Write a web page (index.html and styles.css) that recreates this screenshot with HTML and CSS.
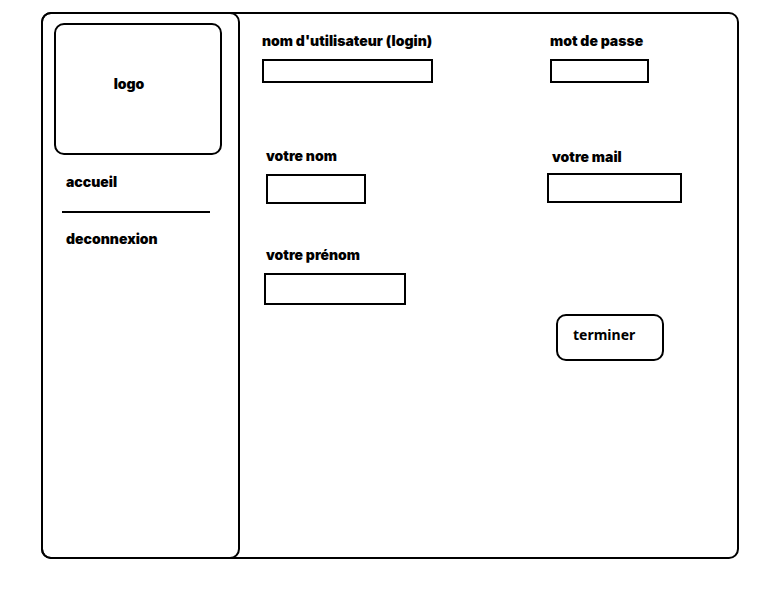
FILE: index.html
```html
<!DOCTYPE html>
<html lang="fr">
<head>
<meta charset="utf-8">
<meta name="viewport" content="width=device-width, initial-scale=1">
<title>Inscription</title>
<link rel="stylesheet" href="styles.css">
</head>
<body>
<div class="frame">
  <aside class="sidebar">
    <div class="logo">logo</div>
    <nav class="menu">
      <a class="menu-link" href="#">accueil</a>
      <hr class="separator">
      <a class="menu-link" href="#">deconnexion</a>
    </nav>
  </aside>
  <main class="content">
    <form class="form">
      <div class="column">
        <div class="field field-login">
          <label for="login">nom d'utilisateur (login)</label>
          <input id="login" type="text">
        </div>
        <div class="field field-nom">
          <label for="nom">votre nom</label>
          <input id="nom" type="text">
        </div>
        <div class="field field-prenom">
          <label for="prenom">votre prénom</label>
          <input id="prenom" type="text">
        </div>
      </div>
      <div class="column">
        <div class="field field-passe">
          <label for="passe">mot de passe</label>
          <input id="passe" type="password">
        </div>
        <div class="field field-mail">
          <label for="mail">votre mail</label>
          <input id="mail" type="email">
        </div>
        <button class="submit" type="button">terminer</button>
      </div>
    </form>
  </main>
</div>
</body>
</html>
```
FILE: styles.css
```css
* {
  box-sizing: border-box;
}

body {
  margin: 12px 35px 33px 41px;
  background: #fff;
  color: #000;
  font: 900 14px/20px Inter, "Liberation Sans", sans-serif;
}

.frame {
  display: flex;
  min-height: calc(100vh - 45px);
  border: 2px solid #000;
  border-radius: 10px;
}

/* The sidebar shares its outer edges with the frame. */
.sidebar {
  flex: 0 0 199px;
  margin: -2px 0 -2px -2px;
  padding: 9px 16px 0 11px;
  border: 2px solid #000;
  border-radius: 10px;
}

.logo {
  display: grid;
  place-items: center;
  height: 132px;
  padding: 0 18px 10px 0;
  border: 2px solid #000;
  border-radius: 10px;
}

.menu {
  display: flex;
  flex-direction: column;
  padding: 17px 12px 0 8px;
}

.menu-link {
  padding-left: 4px;
  color: inherit;
  text-decoration: none;
}

.separator {
  width: 100%;
  margin: 19px 0 16px;
  border: 0;
  border-top: 2px solid #000;
}

.content {
  flex: 1;
  padding: 17px 0 24px 22px;
}

.form {
  display: grid;
  grid-template-columns: 3fr 2fr;
}

.column,
.field {
  display: flex;
  flex-direction: column;
  align-items: flex-start;
}

.field {
  gap: 8px;
  white-space: nowrap;
}

input {
  height: 30px;
  padding: 0 4px;
  border: 2px solid #000;
  border-radius: 0;
  background: #fff;
  font: inherit;
}

.field-login input,
.field-passe input {
  height: 24px;
}

.field-login input {
  width: 171px;
}

.field-nom {
  margin-top: 63px;
  padding-left: 4px;
}

.field-nom input {
  width: 100px;
}

.field-prenom {
  margin-top: 41px;
  padding-left: 2px;
}

.field-prenom input {
  width: 142px;
  height: 32px;
}

.field-prenom label {
  padding-left: 2px;
}

.field-passe {
  padding-left: 3px;
}

.field-passe input {
  width: 99px;
}

.field-mail {
  gap: 6px;
  margin-top: 64px;
}

.field-mail label {
  padding-left: 5px;
}

.field-mail input {
  width: 135px;
}

.submit {
  width: 108px;
  height: 47px;
  margin: 111px 0 0 9px;
  padding: 0 0 5px 15px;
  border: 2px solid #000;
  border-radius: 10px;
  background: #fff;
  color: inherit;
  font: 700 14px/20px "Noto Sans", sans-serif;
  text-align: left;
}
```
